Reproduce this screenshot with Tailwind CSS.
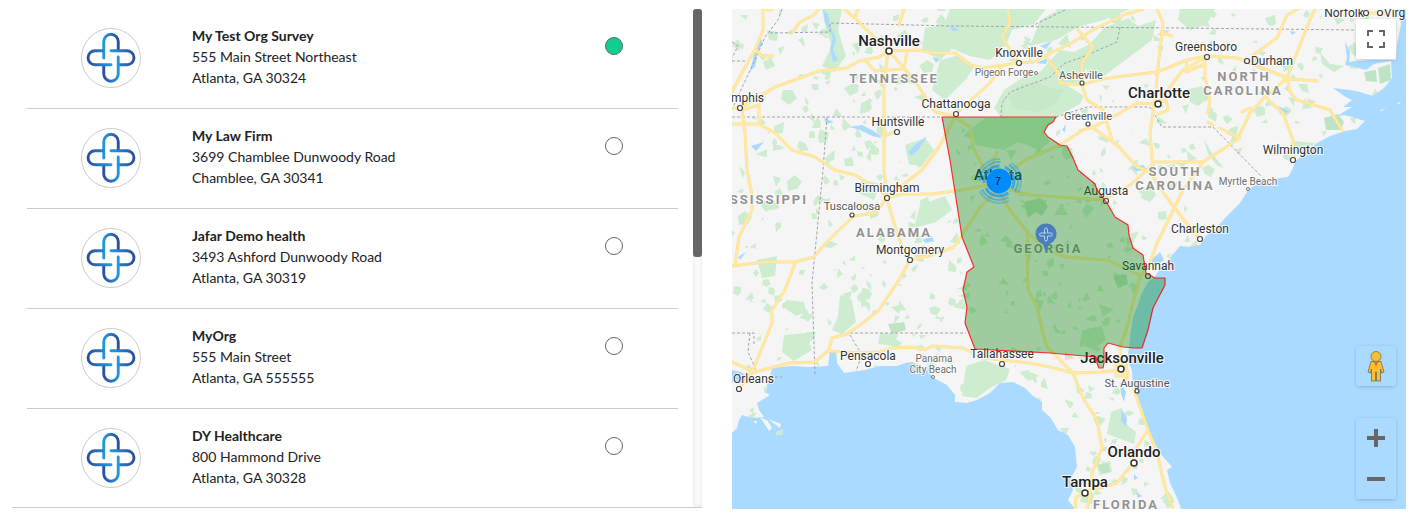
<!DOCTYPE html>
<html lang="en">
<head>
    <meta charset="UTF-8">
    <meta name="viewport" content="width=device-width, initial-scale=1.0">
    <title>Organizations</title>
    <script src="https://cdn.jsdelivr.net/npm/@tailwindcss/browser@4"></script>
</head>
<body class="bg-white">
    <!-- Shared symbols -->
    <svg class="absolute w-0 h-0" aria-hidden="true">
        <defs>
            <linearGradient id="logoV" x1="0" x2="1" y1="0" y2="0">
                <stop offset="0" stop-color="#2298dc"/>
                <stop offset="1" stop-color="#2b4fa2"/>
            </linearGradient>
            <linearGradient id="logoH" x1="1" x2="0" y1="0" y2="0">
                <stop offset="0" stop-color="#2298dc"/>
                <stop offset="1" stop-color="#2b4fa2"/>
            </linearGradient>
            <symbol id="logo" viewBox="0 0 60 60">
                <g fill="none" stroke-width="3" stroke-linecap="round">
                    <path stroke="url(#logoV)" d="M22.500 30V13a7.500 7.500 0 0 1 15 0V21.500"/>
                    <path stroke="url(#logoV)" d="M30 22.500H46.500a7.200 7.200 0 0 1 0 14.500H38"/>
                    <path stroke="url(#logoH)" d="M37.500 29V46.500a7.500 7.500 0 0 1-15 0V38"/>
                    <path stroke="url(#logoH)" d="M30 37H13.500a7.200 7.200 0 0 1 0-14.500H22"/>
                </g>
            </symbol>
        </defs>
    </svg>

    <main class="grid grid-cols-[690fr_674fr] items-start gap-[30px] pl-3 pr-2 pt-[9px]">
        <!-- Organization list -->
        <section class="flex justify-between border-b border-[#ccc] font-[Lato,'Open_Sans',sans-serif] text-sm leading-[21px] text-[#222]">
            <ul class="flex-1 ml-[15px] mr-[15px]">
                <li class="flex h-[100px] border-b border-[#ccc] pl-[54px] pr-[55px] pt-4">
                    <svg class="mt-[3px] size-[60px] shrink-0 rounded-full border border-[#ccc]"><use href="#logo"/></svg>
                    <div class="ml-[51px] flex-1">
                        <label for="org1" class="block font-bold">My Test Org Survey</label>
                        <p>555 Main Street Northeast</p>
                        <p>Atlanta, GA 30324</p>
                    </div>
                    <input type="radio" name="org" id="org1" checked class="mt-3 size-[18px] appearance-none rounded-full border border-[#666] checked:bg-[#0fce8f]">
                </li>
                <li class="flex h-[100px] border-b border-[#ccc] pl-[54px] pr-[55px] pt-4">
                    <svg class="mt-[3px] size-[60px] shrink-0 rounded-full border border-[#ccc]"><use href="#logo"/></svg>
                    <div class="ml-[51px] flex-1">
                        <label for="org2" class="block font-bold">My Law Firm</label>
                        <p>3699 Chamblee Dunwoody Road</p>
                        <p>Chamblee, GA 30341</p>
                    </div>
                    <input type="radio" name="org" id="org2" class="mt-3 size-[18px] appearance-none rounded-full border border-[#666] checked:bg-[#0fce8f]">
                </li>
                <li class="flex h-[100px] border-b border-[#ccc] pl-[54px] pr-[55px] pt-4">
                    <svg class="mt-[3px] size-[60px] shrink-0 rounded-full border border-[#ccc]"><use href="#logo"/></svg>
                    <div class="ml-[51px] flex-1">
                        <label for="org3" class="block font-bold">Jafar Demo health</label>
                        <p>3493 Ashford Dunwoody Road</p>
                        <p>Atlanta, GA 30319</p>
                    </div>
                    <input type="radio" name="org" id="org3" class="mt-3 size-[18px] appearance-none rounded-full border border-[#666] checked:bg-[#0fce8f]">
                </li>
                <li class="flex h-[100px] border-b border-[#ccc] pl-[54px] pr-[55px] pt-4">
                    <svg class="mt-[3px] size-[60px] shrink-0 rounded-full border border-[#ccc]"><use href="#logo"/></svg>
                    <div class="ml-[51px] flex-1">
                        <label for="org4" class="block font-bold">MyOrg</label>
                        <p>555 Main Street</p>
                        <p>Atlanta, GA 555555</p>
                    </div>
                    <input type="radio" name="org" id="org4" class="mt-3 size-[18px] appearance-none rounded-full border border-[#666] checked:bg-[#0fce8f]">
                </li>
                <li class="flex h-[98px] pl-[54px] pr-[55px] pt-4">
                    <svg class="mt-[3px] size-[60px] shrink-0 rounded-full border border-[#ccc]"><use href="#logo"/></svg>
                    <div class="ml-[51px] flex-1">
                        <label for="org5" class="block font-bold">DY Healthcare</label>
                        <p>800 Hammond Drive</p>
                        <p>Atlanta, GA 30328</p>
                    </div>
                    <input type="radio" name="org" id="org5" class="mt-3 size-[18px] appearance-none rounded-full border border-[#666] checked:bg-[#0fce8f]">
                </li>
            </ul>
            <!-- Scrollbar -->
            <div class="w-[9px] rounded bg-[#f9f9f9] shadow-[inset_0_0_3px_#ddd]">
                <div class="h-[248px] rounded-[3px] bg-[#666]"></div>
            </div>
        </section>

        <!-- Map -->
        <section class="relative h-[500px] overflow-hidden bg-[#aadaff]">
            <svg class="block size-full" viewBox="732 9 674 500" preserveAspectRatio="xMinYMin slice" role="img" aria-label="Map of Georgia">
                <rect x="732" y="9" width="674" height="500" fill="#f5f5f5"/>
                <g id="woods" fill="#ceecd0"></g>
                <!-- Forests and parks -->
                <g fill="#ceecd0">
                    <path d="M950 9H1046L1034 24 1012 30 1006 45 990 60 970 56 950 48 940 36Z"/>
                    <path d="M1001 117 994 108 1004 90 1022 78 1040 72 1060 50 1074 52 1086 60 1084 80 1068 86 1084 96 1080 104 1056 117Z"/>
                    <path d="M1074 52 1090 44 1104 28 1128 18 1138 26 1156 20 1152 40 1128 58 1104 76 1088 72Z"/>
                    <path d="M1040 20 1060 9H1130L1104 20 1080 26 1056 40 1030 46Z"/>
                    <path d="M940 60 960 55 975 66 965 80 945 100 932 90Z"/>
                    <path d="M985 118H1055L1044 132 1050 142 1040 150 1018 142 1004 150 975 145 972 128Z"/>
                    <path d="M1180 9H1215L1207 24 1190 30 1178 20Z"/>
                    <path d="M822 9H842L838 30 846 56 834 72 822 66 832 46 826 30Z"/>
                    <path d="M925 28 950 24 957 44 940 60 922 50Z"/>
                    <path d="M905 145 925 138 934 150 920 168 908 160Z"/>
                    <path d="M920 205 945 196 952 210 936 222 914 228Z"/>
                    <path d="M862 180 880 184 874 200 856 192Z"/>
                    <path d="M757 260 777 256 775 276 762 278Z"/>
                    <path d="M784 335 806 333 812 350 794 361 782 352Z"/>
                    <path d="M786 300 804 302 806 312 796 316 785 308Z"/>
                    <path d="M840 295 852 300 856 322 842 334 832 330 838 316Z"/>
                    <path d="M880 333 898 334 894 346 878 344Z"/>
                    <path d="M966 366 984 360 1010 369 1006 380 990 388 976 398 962 396Z"/>
                    <path d="M1111 412 1122 408 1126 424 1136 432 1134 444 1118 438 1107 434Z"/>
                    <path d="M1096 465 1110 461 1112 472 1100 475Z"/>
                    <path d="M1082 330 1102 326 1106 340 1094 350 1080 344Z"/>
                    <path d="M1186 90 1202 86 1208 98 1198 106 1190 102Z"/>
                    <path d="M1294 141 1315 143 1302 154 1294 152Z"/>
                    <path d="M1320 52 1330 64 1344 66 1334 72 1322 64Z"/>
                    <path d="M1204 140 1214 156 1224 168 1218 166 1208 154Z"/>
                </g>
                <g fill="#bfe4c5">
                    <path d="M1324 118 1338 114 1344 122 1341 130 1326 130Z"/>
                    <path d="M1008 96 1022 84 1036 82 1050 88 1064 90 1056 104 1036 112 1014 108Z" fill-opacity=".5"/>
                    <path d="M1098 465 1108 463 1110 472 1102 473Z"/>
                    <path d="M888 324 904 322 906 330 892 334Z"/>
                    <path d="M1113 276 1126 274 1128 284 1118 288Z"/>
                    <path d="M1024 202 1040 198 1048 206 1042 216 1036 212 1028 218Z"/>
                    <path d="M1364 72 1376 70 1377 82 1366 81ZM1378 68 1390 64 1391 80 1380 84Z"/>
                </g>
                <!-- Ocean, lakes and rivers -->
                <g fill="#aadaff">
                    <path d="M1406 9H1399L1401 24 1397 45 1396 60H1370L1349 62 1350 52 1345 41 1347 58 1345 65 1355 67 1366 70 1374 64 1391 61 1392 78 1384 88 1373 96 1360 92 1350 90 1333 88 1344 96 1352 100 1343 107 1352 107 1337 116 1345 115 1365 121 1357 129 1345 131 1330 136 1317 143 1305 152 1296 161 1291 172 1288 177 1280 178 1266 181 1252 187 1247 192 1240 203 1228 215 1215 229 1206 236 1200 245 1190 247 1180 246 1170 258 1160 268 1155 277 1148 282 1142 293 1137 307 1133 317 1131 330 1129 347 1127 360 1132 370 1133 390 1137 400 1148 430 1160 453 1166 460 1172 467 1167 470 1170 483 1178 500 1181 509H1406Z"/>
                    <path d="M1075 509 1068 500 1073 490 1070 480 1077 467 1075 447 1068 435 1058 430 1050 417 1042 410V402L1032 395 1025 388 1013 382 1000 383 990 393 977 400 967 403 955 402V395L947 385 934 378 924 367 912 362 905 363 897 366 879 366 865 370 844 373 837 363 836 350 830 350 828 366 809 367 792 366 772 368 769 380 764 392 770 395 757 403 759 410 764 417 752 418 742 415 739 420 737 428 732 433V509Z"/>
                    <path d="M732 370 741 372 750 378 742 383 732 382Z"/>
                    <path d="M823 9 828 14 830 26 836 38 833 50 838 60 833 62 830 48 833 38 825 22Z"/>
                    <path d="M849 127 862 125 874 131 882 138 872 136 860 130ZM908 152 914 146 927 136 918 150 911 156Z"/>
                    <path d="M932 57 939 59 936 62ZM922 240 932 236 934 241 926 243ZM824 118 834 122 826 124ZM738 257 746 252 740 260ZM751 146 764 142 756 151Z"/>
                    <path d="M1036 63 1048 58 1046 64ZM1040 46 1052 41 1046 49ZM950 26 960 30 952 31ZM1062 130 1066 124 1065 132ZM1132 167 1143 165 1148 170 1136 171ZM1290 31 1296 32 1292 35Z"/>
                    <path d="M1122 410 1127 418 1126 427 1121 420ZM1136 492 1142 496 1138 498ZM1134 474 1138 478 1134 480ZM1120 382 1126 392 1124 402 1121 394Z"/>
                    <path d="M1148 263 1160 252 1164 260 1156 266Z"/>
                    <path d="M760 36 763 44 758 50 755 66 750 72 754 54ZM1278 106 1290 112 1282 113Z"/>
                </g>
                <g fill="#f5f5f5">
                    <path d="M760 417 768 421 772 428 769 431 764 423ZM768 419 781 424 780 428ZM753 421 757 421 756 424ZM1379 111 1386 108 1382 111ZM1397 102 1401 103 1398 104Z"/>
                </g>
                <path fill="#ceecd0" d="M777 431 784 429 782 435 775 435ZM763 388 768 386 766 393Z"/>
                <!-- State borders -->
                <g fill="none" stroke="#a3a3ab" stroke-dasharray="3 2">
                    <path d="M770 33 830 32V23L952 26 1180 28 1357 30M732 117H942M827 117 823 170 812 283 815 375M850 333H966M732 333H754V345M1065 10 1030 27"/>
                    <path d="M1120 27 1117 42 1080 58 1065 63 1050 77 1010 92 1002 103 1001 117M1056 117 1087 107 1150 107 1162 127H1213L1262 177"/>
                    <path d="M782 9 778 20 765 37 755 60 738 96 732 110M732 42 738 46 732 58M732 61H746M750 333 748 352 757 372M850 335 862 355 856 371M770 377 782 377"/>
                </g>
                <!-- Highways -->
                <g fill="none" stroke="#fbdf92" stroke-width="3" stroke-linejoin="round" stroke-linecap="round" id="roads">
                    <path d="M763 9V30L755 50 745 67 732 92M763 10H772M755 50 762 56H773M819 9 814 15 800 22 792 33"/>
                    <path d="M732 108H740L759 97 775 87 819 71 847 68 859 61 879 57 889 51 919 50 932 53H955L970 65 983 68 1018 63 1033 62 1045 56 1073 42 1093 30 1123 15 1143 9"/>
                    <path d="M844 9 855 18 869 32 889 51 904 68 919 87 935 112 955 116M904 9 899 25M858 9 855 18M888 51 884 83V170L887 198"/>
                    <path d="M865 60 875 71 904 69 907 52M732 124H759L775 133 792 150 815 157 835 170 855 175 879 190 887 198M742 110 759 105V123M742 110 745 133 747 170 752 195V210L739 237 735 265"/>
                    <path d="M884 136 897 131M887 198 909 180 922 170 939 147 955 117M887 198 902 194 932 194 962 190 998 183"/>
                    <path d="M887 198 875 213 854 216 842 227 824 245 814 257 795 262H764L732 266M887 198 894 223 902 247 910 260 932 255 954 247 970 223 980 207 998 190"/>
                    <path d="M910 260 899 280 879 310 860 325 847 334 832 338 829 350 815 362 789 363 755 372 732 362M795 263 785 290 772 310V323L752 373M752 373 742 385"/>
                    <path d="M829 351 859 353 879 352 892 348 912 347 925 350 932 346 963 348 983 358 1030 363 1050 367 1073 373 1100 372 1120 370"/>
                    <path d="M998 190 1010 210 1028 233 1027 260 1028 290 1037 307 1042 330 1047 347 1060 360 1073 373 1083 398 1097 420 1102 448 1092 473 1091 490 1087 509"/>
                    <path d="M1120 370 1133 387 1148 430 1157 453 1165 487 1173 509M1148 430 1137 447 1133 463 1117 483 1093 490 1076 497 1075 509M1116 365H1126L1128 376H1116Z"/>
                    <path d="M1028 233 1047 250 1067 257 1107 260 1140 275M1010 190 1030 195 1103 200 1130 185 1147 170 1155 162 1203 162 1237 140 1250 113 1265 97 1287 78 1298 50 1310 20 1315 9"/>
                    <path d="M998 180 1025 160 1060 145 1083 130 1093 127 1113 117 1137 103 1158 104 1170 87 1183 70 1205 58M955 117 970 127 973 147 983 167 998 180M997 152 990 170"/>
                    <path d="M1120 370V347L1127 327 1133 303 1140 277 1150 263 1157 243 1167 223 1183 190 1203 162M1157 9 1163 23 1158 67 1155 100 1150 133 1153 170"/>
                    <path d="M1163 33 1172 36M1093 128 1117 145 1137 167 1150 172 1165 195 1180 215 1197 236M1045 55 1058 73 1060 83 1082 85 1097 80 1123 76 1157 72 1187 60 1207 56 1237 58 1267 70 1287 78"/>
                    <path d="M1082 83V63L1093 47 1078 30M1082 85 1087 100 1103 110 1110 133 1113 143M1018 63 1002 37 1010 23 1008 9M1000 68 990 83 957 113"/>
                    <path d="M1298 9 1287 15 1277 38 1253 55M1265 97 1283 113 1293 140 1294 157M1287 78 1290 92 1297 100 1330 110 1342 130M1270 71 1290 79 1317 81M1205 60V77L1210 100 1208 113M1208 122 1213 125M1220 128 1240 138M1242 112 1250 108M1158 104 1166 100 1168 110 1158 114M1187 60 1186 72 1205 64M1366 13H1385"/>
                </g>
                <!-- State names -->
                <g class="font-[Roboto,sans-serif] font-bold text-[13px] tracking-[2px]" text-anchor="middle" fill="#929292" stroke="#fff" stroke-width="2" stroke-opacity=".7" paint-order="stroke">
                    <text x="894" y="83">TENNESSEE</text>
                    <text x="1244" y="81">NORTH</text>
                    <text x="1243" y="95">CAROLINA</text>
                    <text x="1175" y="176">SOUTH</text>
                    <text x="1175" y="190">CAROLINA</text>
                    <text x="808" y="204" text-anchor="end">MISSISSIPPI</text>
                    <text x="894" y="237">ALABAMA</text>
                    <text x="1048" y="253">GEORGIA</text>
                    <text x="1126" y="509">FLORIDA</text>
                </g>
                <!-- Cities -->
                <g class="font-[Roboto,sans-serif] text-[12px]" text-anchor="middle" fill="#333" stroke="#fff" stroke-width="2" stroke-opacity=".8" paint-order="stroke">
                    <g class="font-medium text-[15px]" fill="#222">
                        <text x="889" y="46">Nashville</text>
                        <text x="1159" y="98">Charlotte</text>
                        <text x="998" y="180">Atlanta</text>
                        <text x="1122" y="363">Jacksonville</text>
                        <text x="1134" y="457">Orlando</text>
                        <text x="1085" y="487">Tampa</text>
                    </g>
                    <text x="1019" y="57">Knoxville</text>
                    <text x="1206" y="51">Greensboro</text>
                    <text x="1272" y="65">Durham</text>
                    <text x="1344" y="17">Norfolk</text>
                    <text x="1384" y="17" text-anchor="start">Virginia Beach</text>
                    <text x="764" y="102" text-anchor="end">Memphis</text>
                    <text x="956" y="108">Chattanooga</text>
                    <text x="898" y="126">Huntsville</text>
                    <text x="887" y="192">Birmingham</text>
                    <text x="910" y="254">Montgomery</text>
                    <text x="1106" y="195">Augusta</text>
                    <text x="1148" y="270">Savannah</text>
                    <text x="1200" y="233">Charleston</text>
                    <text x="1293" y="154">Wilmington</text>
                    <text x="1002" y="358">Tallahassee</text>
                    <text x="868" y="360">Pensacola</text>
                    <text x="733" y="383" text-anchor="start">Orleans</text>
                    <g class="text-[11px]" fill="#555">
                        <text x="852" y="210">Tuscaloosa</text>
                        <text x="1081" y="79">Asheville</text>
                        <text x="1088" y="120">Greenville</text>
                        <text x="1137" y="387">St. Augustine</text>
                    </g>
                    <g class="text-[10px]" fill="#6e6e6e">
                        <text x="1004" y="76">Pigeon Forge</text>
                        <text x="1248" y="185">Myrtle Beach</text>
                        <text x="934" y="362">Panama</text>
                        <text x="933" y="373">City Beach</text>
                    </g>
                </g>
                <g fill="#fff" stroke="#333" stroke-width="1.5">
                    <circle cx="889" cy="51" r="3"/><circle cx="1158" cy="104" r="3"/><circle cx="1121" cy="369" r="3"/>
                    <circle cx="1134" cy="463" r="3"/><circle cx="1085" cy="493" r="3"/>
                </g>
                <g fill="#fff" stroke="#444" stroke-width="1.2">
                    <circle cx="740" cy="108" r="2.5"/><circle cx="897" cy="132" r="2.5"/><circle cx="956" cy="114" r="2.5"/>
                    <circle cx="1019" cy="63" r="2.5"/><circle cx="1207" cy="57" r="2.5"/><circle cx="1247" cy="61" r="2.5"/>
                    <circle cx="1366" cy="13" r="2.5"/><circle cx="1380" cy="13" r="2.5"/><circle cx="1293" cy="160" r="2.5"/>
                    <circle cx="887" cy="198" r="2.5"/><circle cx="910" cy="260" r="2.5"/><circle cx="1106" cy="201" r="2.5"/>
                    <circle cx="1148" cy="276" r="2.5"/><circle cx="1200" cy="239" r="2.5"/><circle cx="1002" cy="364" r="2.5"/>
                    <circle cx="868" cy="364" r="2.5"/><circle cx="739" cy="389" r="2.5"/>
                    <circle cx="852" cy="215" r="2"/><circle cx="1082" cy="83" r="2"/><circle cx="1088" cy="124" r="2"/><circle cx="1137" cy="391" r="2"/>
                </g>
                <g fill="#fff" stroke="#777">
                    <circle cx="1036" cy="73" r="1.5"/><circle cx="1248" cy="189" r="1.5"/><circle cx="933" cy="377" r="1.5"/>
                </g>
                <!-- Georgia outline -->
                <path fill="#008000" fill-opacity=".35" stroke="#ff0000" stroke-opacity=".8" stroke-width="1.2" stroke-linejoin="round" d="M942 117H1056L1053 122 1048 125 1044 132 1048 137 1060 145 1067 146 1073 158 1078 170 1095 184 1097 190 1107 203 1115 217 1128 225 1129 235 1133 248 1143 255 1146 273 1155 278H1165V285L1153 308 1148 330 1142 348H1134L1123 347 1108 343 1104 348V363L1103 368H1099L1097 363 1096 357 1050 353 975 349 965 323 967 307 963 290 967 272 974 267 962 237 950 160Z"/>
                <!-- Cluster of organizations -->
                <g fill="none" stroke="#008cff">
                    <circle cx="999" cy="181" r="15" stroke-width="3" stroke-opacity=".6" stroke-dasharray="26 5.4" stroke-dashoffset="18"/>
                    <circle cx="999" cy="181" r="19" stroke-width="2" stroke-opacity=".45" stroke-dasharray="31 8.8" stroke-dashoffset="20"/>
                    <circle cx="999" cy="181" r="22" stroke-width="2" stroke-opacity=".3" stroke-dasharray="34 12" stroke-dashoffset="22"/>
                </g>
                <circle cx="999" cy="181" r="12.5" fill="#008cff"/>
                <text x="998" y="185" text-anchor="middle" class="font-['Liberation_Sans',sans-serif] text-[11px]" fill="#111">7</text>
                <!-- Single organization pin -->
                <path fill="#4a7fbe" d="M1046 253 1043 244A10.500 10.500 0 1 1 1049 244Z"/>
                <path fill="none" stroke="#b9d4ee" d="M1044.500 234V229.500a1.500 1.500 0 0 1 3 0V233H1051a1.500 1.500 0 0 1 0 3H1047.500V239.500a1.500 1.500 0 0 1-3 0V236H1041a1.500 1.500 0 0 1 0-3H1046"/>
            </svg>

            <!-- Map controls -->
            <button type="button" aria-label="Toggle fullscreen" class="absolute right-[10px] top-[10px] grid size-10 place-items-center rounded-xs bg-white shadow-[0_1px_4px_-1px_rgba(0,0,0,0.3)]">
                <svg class="size-[18px]" viewBox="0 0 18 18" fill="#666"><path d="M0 0v6h2V2h4V0H0zm16 0h-4v2h4v4h2V0h-2zm0 16h-4v2h6v-6h-2v4zM2 12H0v6h6v-2H2v-4z"/></svg>
            </button>
            <div class="absolute bottom-[10px] right-[10px] flex w-10 flex-col gap-8">
                <button type="button" aria-label="Street View" class="grid h-10 place-items-center rounded-xs bg-[#aadaff] shadow-[0_1px_4px_-1px_rgba(0,0,0,0.3)]">
                    <svg class="h-[32px] w-[20px]" viewBox="0 0 20 32" fill="#fdbf2d" stroke="#6d6d55" stroke-width=".8" stroke-linejoin="round">
                        <path d="M5 11.500H15L18 22 15.500 23 14.500 19V31H10.500V22H9.500V31H5.500V19L4.500 23 2 22Z"/>
                        <circle cx="10" cy="6.500" r="5"/>
                        <path fill="#e5762f" stroke="none" d="M7.500 11.800H12.500L10 17Z"/>
                    </svg>
                </button>
                <div class="flex flex-col rounded-xs bg-[#aadaff] shadow-[0_1px_4px_-1px_rgba(0,0,0,0.3)]">
                    <button type="button" aria-label="Zoom in" class="grid h-10 place-items-center">
                        <svg class="size-[18px]" viewBox="0 0 18 18" fill="#666"><path d="M18 7h-7V0H7v7H0v4h7v7h4v-7h7z"/></svg>
                    </button>
                    <button type="button" aria-label="Zoom out" class="grid h-[41px] place-items-center">
                        <svg class="size-[18px]" viewBox="0 0 18 18" fill="#666"><path d="M0 7h18v4H0V7z"/></svg>
                    </button>
                </div>
            </div>
        </section>
    </main>

    <script>
        // lighter centre line for the highways
        const roads = document.getElementById('roads');
        const lanes = roads.cloneNode(true);
        lanes.removeAttribute('id');
        lanes.setAttribute('stroke', '#ffe9a3');
        lanes.setAttribute('stroke-width', '2');
        roads.after(lanes);

        // small woods scattered over the land
        let seed = 11;
        const rand = () => (seed = (seed * 16807) % 2147483647) / 2147483647;
        let d = '';
        for (let i = 0; i < 850; i++) {
            const x = 732 + rand() * 660;
            const y = 9 + rand() * 500;
            const r = 2 + rand() * 5;
            let a = rand() * 6;
            const corners = 3 + Math.floor(rand() * 3);
            for (let k = 0; k < corners; k++) {
                const s = r * (0.3 + rand() * 1.1);
                d += (k ? 'L' : 'M') + Math.round(x + Math.cos(a) * s) + ' ' + Math.round(y + Math.sin(a) * s);
                a += 6.28 / corners;
            }
            d += 'Z';
        }
        const path = document.createElementNS('http://www.w3.org/2000/svg', 'path');
        path.setAttribute('d', d);
        document.getElementById('woods').append(path);
    </script>
</body>
</html>
